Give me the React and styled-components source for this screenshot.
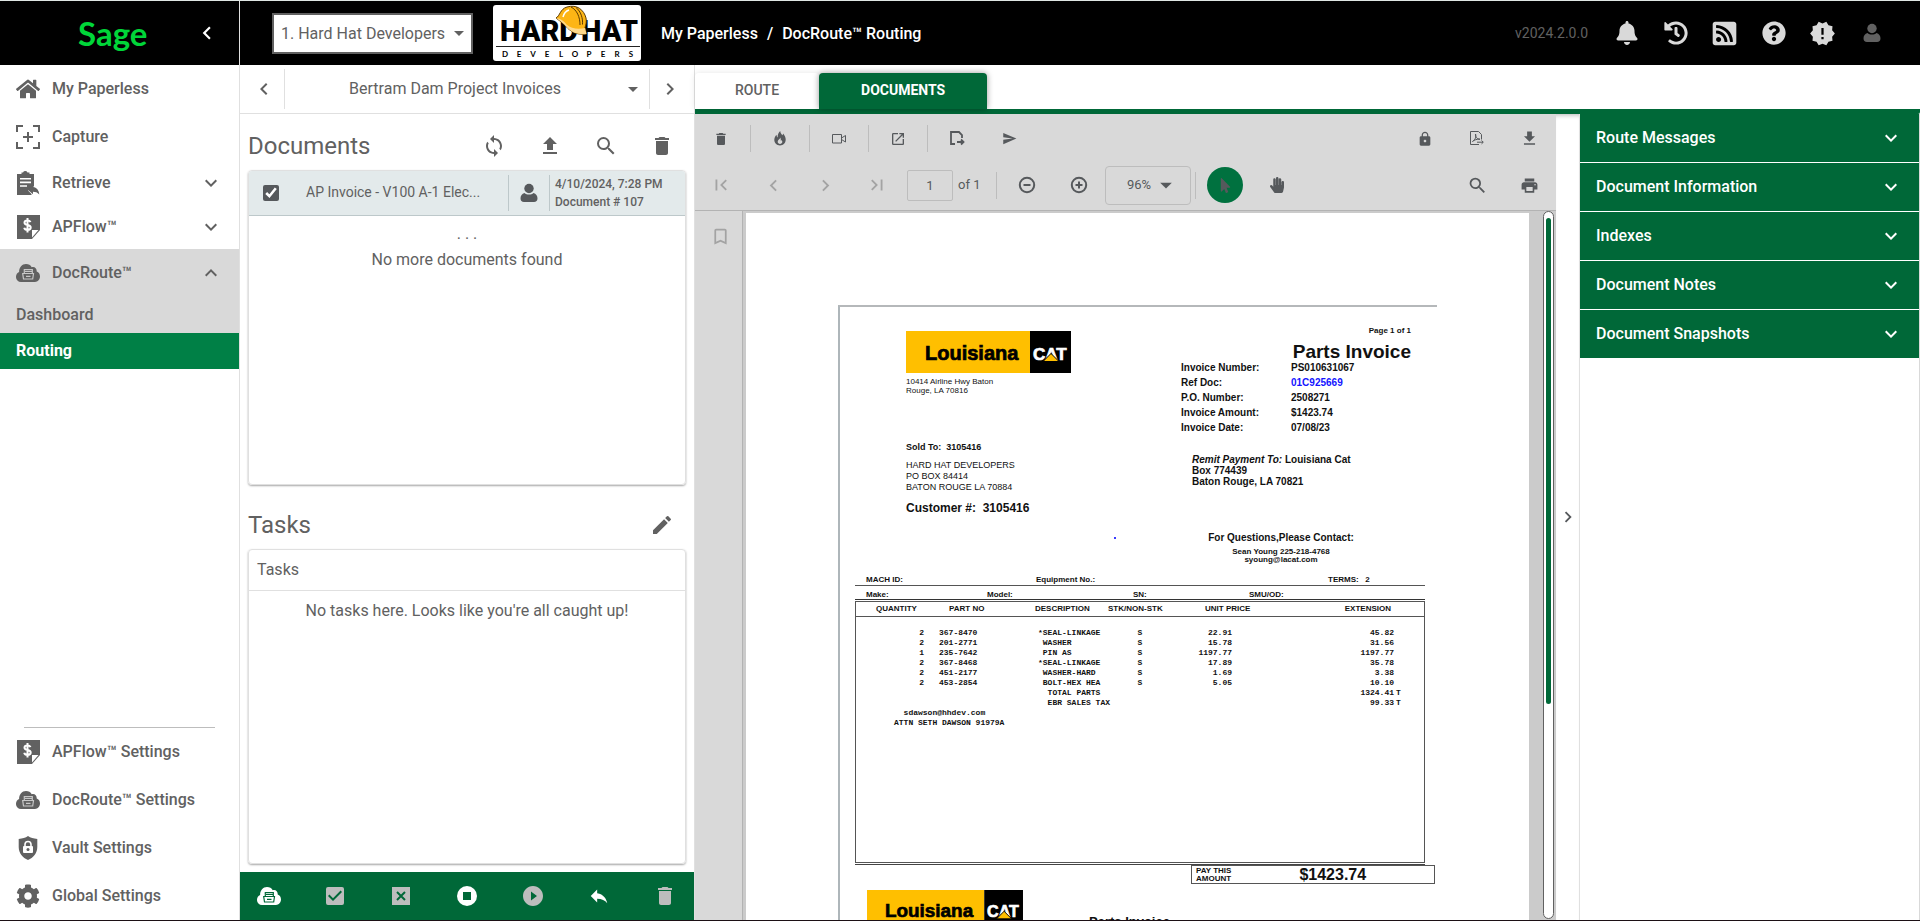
import React, { useState } from "react";
import styled, { createGlobalStyle } from "styled-components";
import {
  MdArrowDropDown,
  MdBookmarkBorder,
  MdCheckBox,
  MdChevronLeft,
  MdChevronRight,
  MdDelete,
  MdDownload,
  MdEdit,
  MdExpandLess,
  MdExpandMore,
  MdFirstPage,
  MdLastPage,
  MdLock,
  MdNewReleases,
  MdOpenInNew,
  MdPlayCircleFilled,
  MdPrint,
  MdReply,
  MdSearch,
  MdSend,
  MdSync,
  MdUpload,
} from "react-icons/md";
import {
  FaBell,
  FaCog,
  FaHandPaper,
  FaHistory,
  FaHome,
  FaMousePointer,
  FaQuestionCircle,
  FaRssSquare,
} from "react-icons/fa";

const CaptureIcon = () => (
  <svg width="24" height="24" viewBox="0 0 24 24" fill="none" stroke="currentColor" strokeWidth="2">
    <path d="M1 7V1h6M17 1h6v6M23 17v6h-6M7 23H1v-6M12 7v10M7 12h10" />
  </svg>
);

const RetrieveIcon = () => (
  <svg width="24" height="24" viewBox="0 0 24 24" fill="currentColor">
    <path
      fillRule="evenodd"
      d="M1 3h4.500V1.500L7 1.500A2.500 2.500 0 0 1 11.500 1.500L13.500 1.500V3H18v12.200l-6 4.300 3.500 3.500v1H1zM4 7v1.600h11V7zM4 10.600v1.600h11v-1.600zM4 14.200v1.600h7v-1.600z"
    />
    <path d="M17 16v-2.200l-5.200 4.900 5.200 4.600v-2.600c2.500 0 4.500.6 6.300 2.700-.4-4-2.500-7-6.300-7.400z" />
  </svg>
);

const InvoiceIcon = () => (
  <svg width="24" height="24" viewBox="0 0 24 24" fill="currentColor">
    <path d="M1 0h23v15l-8 9H1z" />
    <path d="M16 15h6.500L16 22.500z" fill="#fff" />
    <path
      d="M14.500 7.200C14 5.900 12.900 5.400 11.500 5.400c-1.700 0-3 .8-3 2.300 0 3.300 6.200 1.400 6.200 4.900 0 1.500-1.400 2.400-3.200 2.400-1.600 0-2.900-.7-3.300-2.200M11.500 3v14.500"
      fill="none"
      stroke="#fff"
      strokeWidth="2"
    />
  </svg>
);

const CloudIcon = ({ detail = "#c8c8c8" }) => (
  <svg width="24" height="24" viewBox="0 0 24 24" fill="currentColor">
    <path d="M5 21a5 5 0 0 1-5-5.200C0 13.500 1.300 11.700 3.100 11 3 6.500 6 3 10 3c2.600 0 4.600 1.200 5.700 3.200C18.700 5.200 21 7.500 20.700 10.600 22.700 11.300 24 13.200 24 15.600 24 18.600 21.800 21 19 21z" />
    <path
      d="M8.300 12V8.500h8V12M9 10.300h7M7.500 18l-.8-5.500h10.800L16.700 18zM10 15.300h4.500"
      fill="none"
      stroke={detail}
      strokeWidth="1.200"
    />
  </svg>
);

const VaultIcon = () => (
  <svg width="24" height="24" viewBox="0 0 24 24" fill="currentColor">
    <path d="M12 0c2.500 1.700 5.500 2.600 9.300 2.900V11c0 6-4 10.800-9.300 13C6.700 21.800 2.700 17 2.700 11V2.900C6.500 2.600 9.500 1.700 12 0z" />
    <path d="M9 10V8.500a3 3 0 0 1 6 0V10" fill="none" stroke="#fff" strokeWidth="1.600" />
    <rect x="7" y="10" width="10" height="7" rx="1" fill="#fff" />
    <circle cx="12" cy="13.400" r="1.500" />
  </svg>
);

const UserIcon = () => (
  <svg width="18" height="20" viewBox="0 0 18 20" fill="currentColor">
    <circle cx="9" cy="5.500" r="4.700" />
    <path d="M4.500 10c1.200 1 2.700 1.600 4.500 1.600s3.300-.6 4.500-1.600c2.500.6 4 2.700 4 5.300 0 2.500-1.300 3.700-3.500 3.700H4C1.800 19 .5 17.800.5 15.300c0-2.600 1.500-4.700 4-5.300z" />
  </svg>
);

const FireIcon = () => (
  <svg width="12" height="15" viewBox="0 0 12 15" fill="currentColor">
    <path
      fillRule="evenodd"
      d="M6.200 0c.3 2.200 1.300 3 2 4.200.6-.4.900-1 .9-1.800C10.800 4.200 11.700 6.300 11.700 8.600 11.700 12.100 9.300 14.500 6 14.500S.3 12.100.3 9.100c0-2.200 1-3.900 2.300-5.300 0 1.300.3 2.100 1 2.600C3.500 3.900 4.600 1.600 6.200 0zM6.300 6.500C5.900 8.300 3.700 8.800 3.700 10.800c0 1.300 1 2.100 2.300 2.100s2.300-.8 2.300-2.100c0-.7-.3-1.300-.6-1.900-.2.500-.5.700-.9.800.1-1.200-.1-2.300-.5-3.200z"
    />
  </svg>
);

const CameraIcon = () => (
  <svg width="14" height="10" viewBox="0 0 14 10" fill="none" stroke="currentColor">
    <path d="M.5.500h9v8.500h-9zM9.500 4l4-2.500v6.500L9.500 5.500" />
  </svg>
);

const ExportIcon = () => (
  <svg width="15" height="15" viewBox="0 0 15 15" fill="none" stroke="currentColor" strokeWidth="1.800">
    <path d="M5 13H1V1h8l3 3v3M7 11h6M11 8.500l2.500 2.500-2.500 2.500" />
  </svg>
);

const PdfIcon = () => (
  <svg width="14" height="15" viewBox="0 0 14 15" fill="none" stroke="currentColor">
    <path d="M9 13.500H.5V.500h8l3 3v5M7 11.200h6M11.500 9.500l1.800 1.700-1.800 1.700M2.500 10.500c3-2 4-5 3-7.500C5 6 7 8 10 8.200 7 8 4 9 2.500 10.500z" />
  </svg>
);

const ZoomSignIcon = ({ plus }) => (
  <svg width="18" height="18" viewBox="0 0 18 18" fill="none" stroke="currentColor" strokeWidth="2">
    <circle cx="9" cy="9" r="7.200" />
    <path d={plus ? "M5.500 9h7M9 5.500v7" : "M5.500 9h7"} />
  </svg>
);

const RejectIcon = () => (
  <svg width="18" height="18" viewBox="0 0 18 18">
    <path d="M0 0h18v18H0z" fill="currentColor" />
    <path d="M5 5l8 8M13 5l-8 8" stroke="#006838" strokeWidth="2" />
  </svg>
);

const StopIcon = () => (
  <svg width="20" height="20" viewBox="0 0 20 20">
    <circle cx="10" cy="10" r="10" fill="currentColor" />
    <path d="M6 6h8v8H6z" fill="#006838" />
  </svg>
);

const HardHatLogo = () => (
  <svg width="148" height="56" viewBox="0 0 148 56" role="img" aria-label="Hard Hat Developers">
    <rect width="148" height="56" rx="3" fill="#fff" />
    <g fontFamily="Roboto, sans-serif" fontWeight="900" fontSize="29">
      <text x="7" y="36">HARD</text>
      <text x="88" y="36">HAT</text>
    </g>
    <path d="M3 41.500h144" stroke="#222" />
    <g fontFamily="Lato, sans-serif" fontSize="8" fontWeight="700" textAnchor="middle">
      {"DEVELOPERS".split("").map((letter, i) => (
        <text key={i} x={12 + i * 14} y="52">
          {letter}
        </text>
      ))}
    </g>
    <path
      d="M63 13C67 11 67 4 74 2c10-3 17 3 19 11 .6 3.500.2 6.500-1 9.500l1.500 6.500c-8 1-14-1-19-6-2-2.500-5.500-5.500-11.500-10z"
      fill="#fdb515"
      stroke="#5b3a00"
    />
    <path d="M63 13c4 0 8 3 10.500 6.500 5 4.500 12 5 18.500 3.500l1.500 6c-8 1-14-1-19-6-2-2.500-5.500-6-11.500-10z" fill="#ffd98a" />
    <path d="M78 2c6 3 9 10 9 18M83 2.500c5 4 7 11 6.500 17" fill="none" stroke="#5b3a00" />
    <path d="M70 12c1-4 3-6 6-7" fill="none" stroke="#fff" strokeWidth="1.500" />
  </svg>
);

const LouisianaLogo = ({ width = 165 }) => (
  <svg width={width} viewBox="0 0 165 42" role="img" aria-label="Louisiana CAT">
    <path d="M0 0h124v42H0z" fill="#ffbf00" />
    <path d="M124 0h41v42h-41z" fill="#000" />
    <g fontFamily="'Liberation Sans', Arial, sans-serif" fontWeight="700">
      <text x="19" y="29" fontSize="20" stroke="#000" strokeWidth=".7">
        Louisiana
      </text>
      <text x="127" y="29" fontSize="17" fill="#fff" stroke="#fff" strokeWidth=".7">
        CAT
      </text>
    </g>
    <path d="M137 30.500l8-8 8 8z" fill="#ffbf00" stroke="#000" />
  </svg>
);

const menu = [
  { label: "My Paperless", icon: <FaHome size={24} />, height: 48 },
  { label: "Capture", icon: <CaptureIcon />, height: 48 },
  { label: "Retrieve", icon: <RetrieveIcon />, height: 44, expand: true },
  { label: "APFlow™", icon: <InvoiceIcon />, height: 44, expand: true },
];

const settings = [
  { label: "APFlow™ Settings", icon: <InvoiceIcon /> },
  { label: "DocRoute™ Settings", icon: <CloudIcon /> },
  { label: "Vault Settings", icon: <VaultIcon /> },
  { label: "Global Settings", icon: <FaCog size={24} /> },
];

const sections = [
  "Route Messages",
  "Document Information",
  "Indexes",
  "Document Notes",
  "Document Snapshots",
];

const invoiceInfo = [
  ["Invoice Number:", "PS010631067"],
  ["Ref Doc:", "01C925669", true],
  ["P.O. Number:", "2508271"],
  ["Invoice Amount:", "$1423.74"],
  ["Invoice Date:", "07/08/23"],
];

const parts = [
  ["2", "367-8470", "*SEAL-LINKAGE", "S", "22.91", "45.82", ""],
  ["2", "201-2771", " WASHER", "S", "15.78", "31.56", ""],
  ["1", "235-7642", " PIN AS", "S", "1197.77", "1197.77", ""],
  ["2", "367-8468", "*SEAL-LINKAGE", "S", "17.89", "35.78", ""],
  ["2", "451-2177", " WASHER-HARD", "S", "1.69", "3.38", ""],
  ["2", "453-2854", " BOLT-HEX HEA", "S", "5.05", "10.10", ""],
  ["", "", "  TOTAL PARTS", "", "", "1324.41", "T"],
  ["", "", "  EBR SALES TAX", "", "", "99.33", "T"],
];

const Invoice = () => (
  <Page>
    <Scan>
      <InvoiceTop>
        <Seller>
          <LouisianaLogo />
          <Address>
            10414 Airline Hwy Baton
            <br />
            Rouge, LA 70816
          </Address>
          <SoldTo>Sold To:&nbsp; 3105416</SoldTo>
          <Buyer>
            HARD HAT DEVELOPERS
            <br />
            PO BOX 84414
            <br />
            BATON ROUGE LA 70884
          </Buyer>
          <Customer>Customer #:&nbsp; 3105416</Customer>
          <BlueDot />
        </Seller>
        <Summary>
          <PageCount>Page 1 of 1</PageCount>
          <InvoiceTitle>Parts Invoice</InvoiceTitle>
          <InfoList>
            {invoiceInfo.map(([label, value, link]) => (
              <React.Fragment key={label}>
                <dt>{label}</dt>
                <InfoValue $link={link}>{value}</InfoValue>
              </React.Fragment>
            ))}
          </InfoList>
          <Remit>
            <em>Remit Payment To:</em> Louisiana Cat
            <br />
            Box 774439
            <br />
            Baton Rouge, LA 70821
          </Remit>
          <Contact>
            <h4>For Questions,Please Contact:</h4>
            Sean Young 225-218-4768
            <br />
            syoung@lacat.com
          </Contact>
        </Summary>
      </InvoiceTop>
      <InvoiceBody>
        <MachineRow>
          <span>MACH ID:</span>
          <span>Equipment No.:</span>
          <span>TERMS:&nbsp;&nbsp; 2</span>
        </MachineRow>
        <ModelRow>
          <span>Make:</span>
          <span>Model:</span>
          <span>SN:</span>
          <span>SMU/OD:</span>
        </ModelRow>
        <PartsBox>
          <PartsTable>
            <colgroup>
              <col width="68" />
              <col width="96" />
              <col width="85" />
              <col width="70" />
              <col width="80" />
              <col />
              <col width="30" />
            </colgroup>
            <thead>
              <tr>
                <th>QUANTITY</th>
                <th>PART NO</th>
                <th>DESCRIPTION</th>
                <th>STK/NON-STK</th>
                <th>UNIT PRICE</th>
                <th>EXTENSION</th>
                <th />
              </tr>
            </thead>
            <tbody>
              {parts.map((row, i) => (
                <tr key={i}>
                  {row.map((cell, j) => (
                    <td key={j}>{cell}</td>
                  ))}
                </tr>
              ))}
            </tbody>
          </PartsTable>
          <PartsNote>
            {"  sdawson@hhdev.com\n"}
            {"ATTN SETH DAWSON 91979A"}
          </PartsNote>
        </PartsBox>
      </InvoiceBody>
      <PayBox>
        <span>
          PAY THIS
          <br />
          AMOUNT
        </span>
        <strong>$1423.74</strong>
      </PayBox>
      <NextInvoice>
        <LouisianaLogo width={156} />
        <span>Parts Invoice</span>
      </NextInvoice>
    </Scan>
  </Page>
);

const App = () => {
  const [checked, setChecked] = useState(true);
  const [page, setPage] = useState("1");

  return (
    <>
      <GlobalStyle />
      <Shell>
        <Sidebar>
          <Brand>
            <SageLogo href="#home">Sage</SageLogo>
            <IconButton aria-label="Collapse menu" $color="#fff">
              <MdChevronLeft size={26} />
            </IconButton>
          </Brand>
          <nav>
            {menu.map((item) => (
              <MenuItem key={item.label} href="#menu" $height={item.height}>
                {item.icon}
                <MenuLabel>{item.label}</MenuLabel>
                {item.expand && <MdExpandMore size={24} />}
              </MenuItem>
            ))}
            <OpenGroup>
              <MenuItem href="#docroute" $height={48}>
                <CloudIcon />
                <MenuLabel>DocRoute™</MenuLabel>
                <MdExpandLess size={24} />
              </MenuItem>
              <SubItem href="#dashboard">Dashboard</SubItem>
              <SubItem href="#routing" $active>
                Routing
              </SubItem>
            </OpenGroup>
          </nav>
          <SettingsNav>
            <Rule />
            {settings.map((item) => (
              <MenuItem key={item.label} href="#settings" $height={48}>
                {item.icon}
                <MenuLabel>{item.label}</MenuLabel>
              </MenuItem>
            ))}
          </SettingsNav>
        </Sidebar>

        <Content>
          <Header>
            <CompanyPicker>
              <select aria-label="Company">
                <option>1. Hard Hat Developers</option>
              </select>
              <MdArrowDropDown size={24} />
            </CompanyPicker>
            <HardHatLogo />
            <Crumbs aria-label="Breadcrumb">
              <a href="#paperless">My Paperless</a>
              <span>/</span>
              <a href="#routing">DocRoute™ Routing</a>
            </Crumbs>
            <Version>v2024.2.0.0</Version>
            <HeaderButtons>
              <IconButton aria-label="Notifications"><FaBell size={24} /></IconButton>
              <IconButton aria-label="History"><FaHistory size={24} /></IconButton>
              <IconButton aria-label="News"><FaRssSquare size={27} /></IconButton>
              <IconButton aria-label="Help"><FaQuestionCircle size={24} /></IconButton>
              <IconButton aria-label="Releases"><MdNewReleases size={27} /></IconButton>
              <IconButton aria-label="Account" $color="#616161"><UserIcon /></IconButton>
            </HeaderButtons>
          </Header>

          <Work>
            <QueuePanel>
              <QueueNav>
                <IconButton aria-label="Previous queue"><MdChevronLeft size={24} /></IconButton>
                <QueuePicker>
                  <select aria-label="Queue">
                    <option>Bertram Dam Project Invoices</option>
                  </select>
                  <MdArrowDropDown size={24} />
                </QueuePicker>
                <IconButton aria-label="Next queue"><MdChevronRight size={24} /></IconButton>
              </QueueNav>
              <PanelBody>
                <PanelHead>
                  <h2>Documents</h2>
                  <IconButton aria-label="Refresh"><MdSync size={24} /></IconButton>
                  <IconButton aria-label="Upload"><MdUpload size={24} /></IconButton>
                  <IconButton aria-label="Search documents"><MdSearch size={24} /></IconButton>
                  <IconButton aria-label="Delete documents"><MdDelete size={24} /></IconButton>
                </PanelHead>
                <Card>
                  <DocRow>
                    <Check
                      type="checkbox"
                      id="doc-107"
                      checked={checked}
                      onChange={(e) => setChecked(e.target.checked)}
                    />
                    <DocName htmlFor="doc-107">AP Invoice - V100 A-1 Elec...</DocName>
                    <DocOwner>
                      <UserIcon />
                    </DocOwner>
                    <DocMeta>
                      4/10/2024, 7:28 PM
                      <br />
                      Document # 107
                    </DocMeta>
                  </DocRow>
                  <Dots>. . .</Dots>
                  <Empty>No more documents found</Empty>
                </Card>
                <PanelHead $tasks>
                  <h2>Tasks</h2>
                  <IconButton aria-label="Edit tasks"><MdEdit size={24} /></IconButton>
                </PanelHead>
                <Card>
                  <CardTitle>Tasks</CardTitle>
                  <Empty $first>No tasks here. Looks like you're all caught up!</Empty>
                </Card>
              </PanelBody>
              <ActionBar>
                <IconButton aria-label="Route" $color="#fff"><CloudIcon detail="#006838" /></IconButton>
                <IconButton aria-label="Approve" $color="#bdbdbd"><MdCheckBox size={24} /></IconButton>
                <IconButton aria-label="Reject" $color="#bdbdbd"><RejectIcon /></IconButton>
                <IconButton aria-label="Stop" $color="#fff"><StopIcon /></IconButton>
                <IconButton aria-label="Play" $color="#bdbdbd"><MdPlayCircleFilled size={24} /></IconButton>
                <IconButton aria-label="Reply" $color="#fff"><MdReply size={22} /></IconButton>
                <IconButton aria-label="Delete" $color="#bdbdbd"><MdDelete size={24} /></IconButton>
              </ActionBar>
            </QueuePanel>

            <Viewer>
              <Tabs role="tablist">
                <Tab role="tab" aria-selected="false">ROUTE</Tab>
                <Tab role="tab" aria-selected="true" $active>DOCUMENTS</Tab>
              </Tabs>
              <ViewerMain>
                <DocPane>
                  <Toolbar>
                    <Tool $first aria-label="Delete page"><MdDelete size={16} /></Tool>
                    <Tool $sep aria-label="Burn annotations"><FireIcon /></Tool>
                    <Tool $sep aria-label="Record"><CameraIcon /></Tool>
                    <Tool $sep aria-label="Open in new window"><MdOpenInNew size={16} /></Tool>
                    <Tool $sep aria-label="Export"><ExportIcon /></Tool>
                    <Tool $narrow aria-label="Send"><MdSend size={15} /></Tool>
                    <ToolGroup>
                      <IconButton aria-label="Lock"><MdLock size={16} /></IconButton>
                      <IconButton aria-label="Export PDF"><PdfIcon /></IconButton>
                      <IconButton aria-label="Download"><MdDownload size={19} /></IconButton>
                    </ToolGroup>
                  </Toolbar>
                  <PageBar>
                    <Pager>
                      <IconButton aria-label="First page"><MdFirstPage size={22} /></IconButton>
                      <IconButton aria-label="Previous page"><MdChevronLeft size={23} /></IconButton>
                      <IconButton aria-label="Next page"><MdChevronRight size={23} /></IconButton>
                      <IconButton aria-label="Last page"><MdLastPage size={22} /></IconButton>
                    </Pager>
                    <PageInput
                      aria-label="Page"
                      value={page}
                      onChange={(e) => setPage(e.target.value)}
                    />
                    <PageTotal>of 1</PageTotal>
                    <ZoomButton $sep aria-label="Zoom out"><ZoomSignIcon /></ZoomButton>
                    <ZoomButton aria-label="Zoom in"><ZoomSignIcon plus /></ZoomButton>
                    <ZoomPicker>
                      <select aria-label="Zoom">
                        <option>96%</option>
                      </select>
                      <MdArrowDropDown size={28} />
                    </ZoomPicker>
                    <PointerCell>
                      <PointerButton aria-label="Select"><FaMousePointer size={15} /></PointerButton>
                    </PointerCell>
                    <IconButton aria-label="Pan"><FaHandPaper size={16} /></IconButton>
                    <ToolGroup>
                      <IconButton aria-label="Find"><MdSearch size={21} /></IconButton>
                      <IconButton aria-label="Print"><MdPrint size={19} /></IconButton>
                    </ToolGroup>
                  </PageBar>
                  <Canvas>
                    <BookmarkRail>
                      <IconButton aria-label="Bookmarks" $color="#a3a3a3">
                        <MdBookmarkBorder size={21} />
                      </IconButton>
                    </BookmarkRail>
                    <Invoice />
                    <ScrollTrack>
                      <ScrollThumb />
                    </ScrollTrack>
                  </Canvas>
                </DocPane>
                <Collapse aria-label="Collapse details">
                  <MdChevronRight size={22} />
                </Collapse>
                <Details>
                  {sections.map((title) => (
                    <DetailsItem key={title}>
                      {title}
                      <MdExpandMore size={24} />
                    </DetailsItem>
                  ))}
                </Details>
              </ViewerMain>
            </Viewer>
          </Work>
        </Content>
      </Shell>
    </>
  );
};

const GlobalStyle = createGlobalStyle`
  * {
    box-sizing: border-box;
  }
  body {
    margin: 0;
    overflow: hidden;
    background: #fff;
    color: #616161;
    font-family: Roboto, sans-serif;
    font-size: 16px;
    line-height: 20px;
  }
  h2, h3, h4, p, dl, dd, dt {
    margin: 0;
  }
  a {
    color: inherit;
    text-decoration: none;
  }
  button, input, select {
    font: inherit;
    color: inherit;
  }
  button {
    border: 0;
    padding: 0;
    background: none;
    cursor: pointer;
  }
  svg {
    display: block;
    flex: none;
  }
`;

const Shell = styled.div`
  display: flex;
  height: 100vh;
  border-top: 1px solid #dfe6e3;
  border-bottom: 1px solid #1c1015;
`;

const Sidebar = styled.aside`
  display: flex;
  flex-direction: column;
  flex: none;
  width: 240px;
  border-right: 1px solid #e0e0e0;
`;

const Brand = styled.div`
  display: flex;
  align-items: center;
  justify-content: space-between;
  height: 64px;
  padding: 0 19px 0 78px;
  background: #000;
`;

const SageLogo = styled.a`
  color: #00d639;
  font-family: Lato, sans-serif;
  font-size: 33px;
  line-height: 36px;
  font-weight: 700;
`;

const IconButton = styled.button`
  display: inline-flex;
  align-items: center;
  justify-content: center;
  color: ${(props) => props.$color || "inherit"};
`;

const MenuItem = styled.a`
  display: flex;
  align-items: center;
  gap: 12px;
  height: ${(props) => props.$height}px;
  padding: 0 16px;
  font-weight: 500;
`;

const MenuLabel = styled.span`
  flex: 1;
`;

const OpenGroup = styled.div`
  background: #d9d9d9;
`;

const SubItem = styled.a`
  display: block;
  padding: 8px 16px;
  font-weight: ${(props) => (props.$active ? 700 : 500)};
  color: ${(props) => (props.$active ? "#fff" : "inherit")};
  background: ${(props) => (props.$active ? "#008046" : "none")};
`;

const SettingsNav = styled.nav`
  margin-top: auto;
`;

const Rule = styled.hr`
  margin: 0 24px;
  border: 0;
  border-top: 1px solid #bdbdbd;
`;

const Content = styled.main`
  display: flex;
  flex-direction: column;
  flex: 1;
  min-width: 0;
`;

const Header = styled.header`
  display: flex;
  align-items: center;
  flex: none;
  height: 64px;
  padding: 0 24px 0 32px;
  background: #000;
  color: #fff;
`;

/* select and its arrow share one grid cell */
const Picker = styled.div`
  display: grid;
  align-items: center;
  select {
    grid-area: 1 / 1;
    width: 100%;
    height: 100%;
    border: 0;
    background: none;
    appearance: none;
  }
  svg {
    grid-area: 1 / 1;
    justify-self: end;
    pointer-events: none;
  }
`;

const CompanyPicker = styled(Picker)`
  width: 201px;
  height: 41px;
  margin-right: 20px;
  border: 2px solid #616161;
  background: #fff;
  color: #616161;
  select {
    padding: 2px 7px 0;
  }
`;

const Crumbs = styled.nav`
  display: flex;
  gap: 9px;
  flex: 1;
  padding: 2px 0 0 20px;
  font-weight: 500;
`;

const Version = styled.span`
  margin-right: 14px;
  font-size: 14px;
  color: #616161;
`;

const HeaderButtons = styled.div`
  display: grid;
  grid-template-columns: repeat(6, 49px);
  color: #d9d9d9;
`;

const Work = styled.div`
  display: flex;
  flex: 1;
  min-height: 0;
`;

const QueuePanel = styled.section`
  display: flex;
  flex-direction: column;
  flex: none;
  width: 455px;
  border-right: 1px solid #e0e0e0;
`;

const QueueNav = styled.div`
  display: grid;
  grid-template-columns: 44px 1fr 44px;
  padding: 4px 0;
  border-bottom: 1px solid #e0e0e0;
  button:first-child {
    padding-left: 4px;
  }
  button:last-child {
    padding-right: 4px;
  }
`;

const QueuePicker = styled(Picker)`
  height: 40px;
  border: solid #e0e0e0;
  border-width: 0 1px;
  select {
    padding: 0 24px 0 0;
    text-align-last: center;
  }
  svg {
    margin-right: 4px;
  }
`;

const PanelBody = styled.div`
  display: flex;
  flex-direction: column;
  flex: 1;
  min-height: 0;
  padding: 8px;
`;

const PanelHead = styled.div`
  display: flex;
  align-items: center;
  gap: 32px;
  height: ${(props) => (props.$tasks ? 64 : 48)}px;
  padding: ${(props) => (props.$tasks ? "16px 12px 0 0" : "0 12px 0 0")};
  h2 {
    flex: 1;
    font-size: 24px;
    line-height: 32px;
    font-weight: 400;
  }
`;

const Card = styled.div`
  flex: 1;
  border: 1px solid #e0e0e0;
  border-radius: 4px;
  box-shadow: 0 1px 2px rgba(0, 0, 0, 0.35);
  overflow: hidden;
`;

const DocRow = styled.div`
  display: flex;
  align-items: center;
  height: 45px;
  padding-left: 14px;
  background: #e3eaeb;
  border-bottom: 1px solid #bdc8ca;
`;

const Check = styled.input`
  width: 16px;
  height: 16px;
  margin: 0;
  accent-color: #56595c;
`;

const DocName = styled.label`
  flex: 1;
  padding: 0 0 2px 27px;
  font-size: 14px;
  white-space: nowrap;
`;

const DocOwner = styled.span`
  display: flex;
  align-items: center;
  justify-content: center;
  width: 42px;
  height: 36px;
  border: solid #bdc8ca;
  border-width: 0 1px;
  color: #56595c;
`;

const DocMeta = styled.div`
  width: 135px;
  padding-left: 5px;
  font-size: 12px;
  line-height: 18px;
  font-weight: 500;
`;

const Dots = styled.p`
  margin-top: 10px;
  text-align: center;
  line-height: 16px;
`;

const Empty = styled.p`
  margin-top: ${(props) => (props.$first ? 10 : 8)}px;
  text-align: center;
`;

const CardTitle = styled.h3`
  padding: 10px 8px;
  border-bottom: 1px solid #e0e0e0;
  font-size: 16px;
  font-weight: 400;
`;

const ActionBar = styled.div`
  display: flex;
  align-items: center;
  justify-content: space-between;
  height: 48px;
  padding: 0 17px;
  background: #006838;
  button {
    width: 24px;
  }
`;

const Viewer = styled.section`
  display: flex;
  flex-direction: column;
  flex: 1;
  min-width: 0;
`;

const Tabs = styled.div`
  display: flex;
  flex: none;
  padding-top: 8px;
  border-bottom: 5px solid #006838;
  border-bottom-right-radius: 2px;
`;

const Tab = styled.button`
  height: 36px;
  padding: 0 ${(props) => (props.$active ? 42 : 40)}px 2px;
  border-radius: 4px 4px 0 0;
  font-size: 14px;
  font-weight: ${(props) => (props.$active ? 700 : 500)};
  color: ${(props) => (props.$active ? "#fff" : "#616161")};
  background: ${(props) => (props.$active ? "#006838" : "#fff")};
  box-shadow: 0 0 6px rgba(0, 0, 0, ${(props) => (props.$active ? 0.4 : 0.1)});
`;

const ViewerMain = styled.div`
  display: flex;
  flex: 1;
  min-height: 0;
`;

const DocPane = styled.div`
  display: flex;
  flex-direction: column;
  flex: 1;
  min-width: 0;
  background: #d9d9d9;
  color: #56595c;
`;

const Toolbar = styled.div`
  display: flex;
  align-items: center;
  height: 49px;
  flex: none;
`;

const Tool = styled.button`
  display: flex;
  align-items: center;
  justify-content: center;
  width: ${(props) => (props.$first ? 55 : props.$narrow ? 46 : 59)}px;
  height: 27px;
  padding-right: ${(props) => (props.$first ? 4 : 0)}px;
  border-left: 1px solid ${(props) => (props.$sep ? "#bdbdbd" : "transparent")};
`;

const ToolGroup = styled.div`
  display: flex;
  margin-left: auto;
  padding-right: 1px;
  button {
    width: 52px;
  }
`;

const PageBar = styled.div`
  display: flex;
  align-items: center;
  height: 47px;
  flex: none;
  padding-bottom: 3px;
`;

const Pager = styled.div`
  display: grid;
  grid-template-columns: repeat(4, 52px);
  margin-right: 4px;
  color: #a3a3a3;
`;

const PageInput = styled.input`
  width: 46px;
  height: 31px;
  padding: 0;
  border: 1px solid #bdbdbd;
  border-radius: 2px;
  background: none;
  font-size: 13px;
  text-align: center;
`;

const PageTotal = styled.span`
  width: 43px;
  padding-left: 5px;
  font-size: 13px;
`;

const ZoomButton = styled.button`
  display: flex;
  align-items: center;
  justify-content: center;
  width: ${(props) => (props.$sep ? 60 : 45)}px;
  height: 27px;
  border-left: 1px solid ${(props) => (props.$sep ? "#bdbdbd" : "transparent")};
`;

const ZoomPicker = styled(Picker)`
  width: 86px;
  height: 39px;
  margin-left: 4px;
  border: 1px solid #bdbdbd;
  border-radius: 4px;
  font-size: 13px;
  select {
    padding: 0 21px;
  }
  svg {
    margin-right: 10px;
  }
`;

const PointerCell = styled.div`
  display: flex;
  align-items: center;
  height: 27px;
  margin: 0 26px 0 4px;
  padding-left: 11px;
  border-left: 1px solid #bdbdbd;
`;

const PointerButton = styled.button`
  display: flex;
  align-items: center;
  justify-content: center;
  width: 36px;
  height: 36px;
  border-radius: 50%;
  background: #00713f;
`;

const Canvas = styled.div`
  display: flex;
  flex: 1;
  min-height: 0;
  border-top: 1px solid #b3b3b3;
  background: #cbcbcb;
`;

const BookmarkRail = styled.div`
  flex: none;
  width: 48px;
  padding: 15px 0 0 15px;
  border-right: 1px solid #b3b3b3;
  background: #d9d9d9;
`;

const ScrollTrack = styled.div`
  flex: none;
  width: 11px;
  margin: 0 2px 1px 14px;
  padding: 6px 2px;
  border: 1px solid #616161;
  border-radius: 6px;
  background: #fff;
`;

const ScrollThumb = styled.div`
  height: 70%;
  border-radius: 3px;
  background: #006838;
`;

const Collapse = styled.button`
  display: flex;
  align-items: center;
  justify-content: center;
  flex: none;
  width: 24px;
  border-right: 1px solid #e0e0e0;
  color: #56595c;
  box-shadow: inset 0 5px 5px -4px rgba(0, 0, 0, 0.3);
`;

const Details = styled.div`
  flex: none;
  width: 340px;
  border-right: 1px solid #d9d9d9;
`;

const DetailsItem = styled.button`
  display: flex;
  align-items: center;
  justify-content: space-between;
  width: 100%;
  height: 48px;
  margin-bottom: 1px;
  padding: 0 16px;
  background: #006838;
  color: #fff;
  font-weight: 500;
`;

/* invoice page */

const Page = styled.article`
  flex: 1;
  min-width: 0;
  margin: 2px 0 0 3px;
  padding: 92px;
  padding-bottom: 0;
  overflow: hidden;
  background: #fff;
  color: #111;
  font-family: "Liberation Sans", Arial, sans-serif;
  font-size: 8px;
  line-height: 9px;
  font-weight: 700;
`;

const Scan = styled.div`
  border-top: 2px solid #b5b8ba;
  border-left: 2px solid #aeb6ba;
`;

const InvoiceTop = styled.div`
  display: flex;
  justify-content: space-between;
`;

const Seller = styled.div`
  display: flex;
  flex-direction: column;
  width: 276px;
  padding: 24px 0 0 66px;
`;

const Address = styled.p`
  margin-top: 4px;
  font-weight: 400;
`;

const SoldTo = styled.p`
  margin-top: 47px;
  font-size: 9px;
  line-height: 10px;
`;

const Buyer = styled.p`
  margin-top: 8px;
  font-size: 9px;
  line-height: 11px;
  font-weight: 400;
`;

const Customer = styled.p`
  margin-top: 8px;
  font-size: 12px;
  line-height: 14px;
`;

const BlueDot = styled.i`
  align-self: flex-end;
  width: 2px;
  height: 2px;
  margin-top: 22px;
  background: #3a3aff;
`;

const Summary = styled.div`
  width: 256px;
  padding-top: 19px;
`;

const PageCount = styled.p`
  padding-right: 26px;
  text-align: right;
`;

const InvoiceTitle = styled.h3`
  margin-top: 8px;
  padding-right: 26px;
  text-align: right;
  font-size: 19px;
  line-height: 17px;
`;

const InfoList = styled.dl`
  display: grid;
  grid-template-columns: 110px 1fr;
  font-size: 10px;
  line-height: 15px;
`;

const InfoValue = styled.dd`
  color: ${(props) => (props.$link ? "#1414ff" : "inherit")};
`;

const Remit = styled.p`
  margin-top: 19px;
  padding-left: 11px;
  font-size: 10px;
  line-height: 11px;
`;

const Contact = styled.div`
  width: 200px;
  margin-top: 45px;
  line-height: 8px;
  text-align: center;
  h4 {
    padding-bottom: 4px;
    font-size: 10px;
    line-height: 12px;
  }
`;

const InvoiceBody = styled.div`
  margin: 11px 12px 0 15px;
  border-bottom: 1px solid #444;
`;

const MachineRow = styled.div`
  display: grid;
  grid-template-columns: 170px 1fr 97px;
  height: 11px;
  padding-left: 11px;
  border-bottom: 1px solid #555;
`;

const ModelRow = styled.div`
  display: grid;
  grid-template-columns: 121px 146px 116px 1fr;
  align-items: end;
  height: 14px;
  padding-left: 11px;
  border-bottom: 1px solid #333;
`;

const PartsBox = styled.div`
  height: 262px;
  margin: 1px 0;
  border: 1px solid #555;
`;

const PartsTable = styled.table`
  width: 100%;
  table-layout: fixed;
  border-collapse: collapse;
  white-space: pre;
  th,
  td {
    padding: 0;
    text-align: left;
  }
  th {
    height: 14px;
    border-bottom: 1px solid #555;
  }
  th:nth-child(1) {
    padding-left: 20px;
  }
  th:nth-child(2) {
    padding-left: 25px;
  }
  th:nth-child(3) {
    padding-left: 15px;
  }
  th:nth-child(4) {
    padding-left: 3px;
  }
  th:nth-child(5) {
    padding-left: 30px;
  }
  th:nth-child(6) {
    padding-right: 3px;
    text-align: right;
  }
  td {
    height: 10px;
    font-family: "Liberation Mono", "Courier New", monospace;
    line-height: 10px;
  }
  tbody tr:first-child td {
    padding-top: 11px;
  }
  td:nth-child(1),
  td:nth-child(6) {
    text-align: right;
  }
  td:nth-child(2) {
    padding-left: 15px;
  }
  td:nth-child(3) {
    padding-left: 18px;
  }
  td:nth-child(4) {
    text-align: center;
  }
  td:nth-child(5) {
    padding-right: 23px;
    text-align: right;
  }
  td:nth-child(7) {
    padding-left: 2px;
  }
`;

const PartsNote = styled.p`
  padding-left: 38px;
  font-family: "Liberation Mono", "Courier New", monospace;
  line-height: 10px;
  white-space: pre;
`;

const PayBox = styled.div`
  display: flex;
  align-items: center;
  width: 244px;
  height: 19px;
  margin: 0 2px 0 auto;
  padding-left: 4px;
  border: 1px solid #555;
  line-height: 8px;
  strong {
    margin-left: 68px;
    font-size: 16px;
    line-height: 16px;
  }
`;

const NextInvoice = styled.div`
  display: flex;
  gap: 66px;
  padding: 6px 0 0 27px;
  span {
    padding-top: 24px;
    font-size: 13px;
    line-height: 15px;
  }
`;

export default App;
